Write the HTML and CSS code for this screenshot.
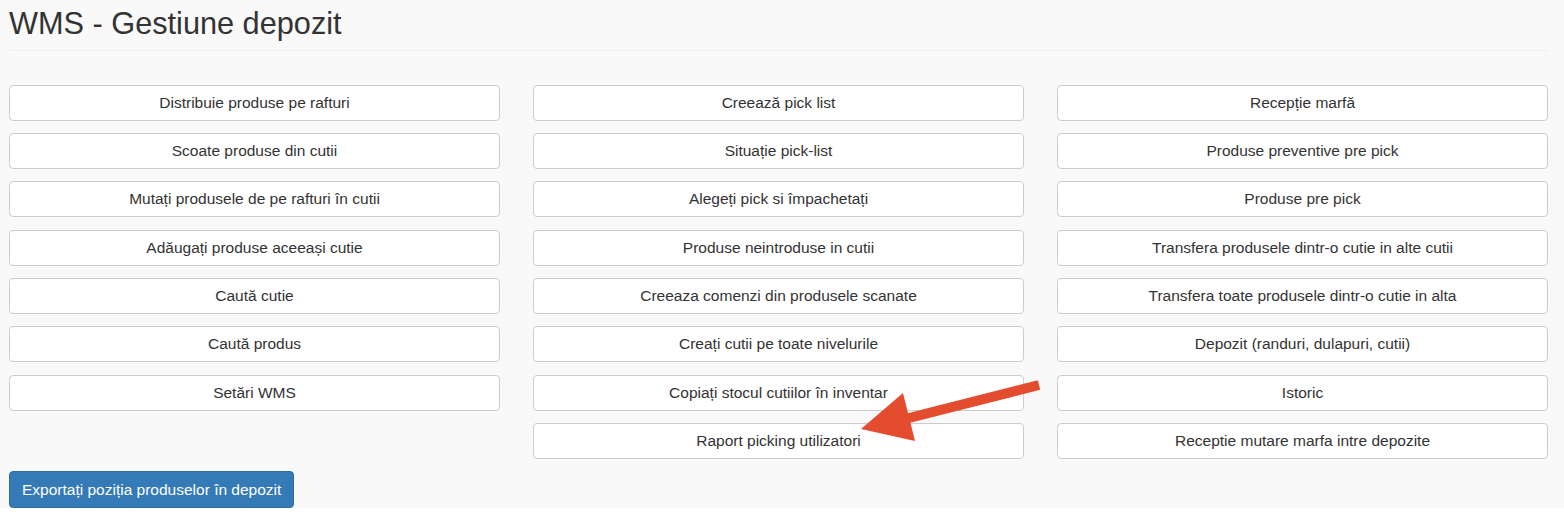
FILE: index.html
```html
<!DOCTYPE html>
<html>

<head>
    <link rel="stylesheet" href="styles.css">
</head>

<body>
    <div id="page">
        <h2 class="page-title">WMS - Gestiune depozit</h2>

        <div class="menu">
            <div class="menu-col">
                <a class="btn">Distribuie produse pe rafturi</a>
                <a class="btn">Scoate produse din cutii</a>
                <a class="btn">Mutați produsele de pe rafturi în cutii</a>
                <a class="btn">Adăugați produse aceeași cutie</a>
                <a class="btn">Caută cutie</a>
                <a class="btn">Caută produs</a>
                <a class="btn">Setări WMS</a>
            </div>
            <div class="menu-col">
                <a class="btn">Creează pick list</a>
                <a class="btn">Situație pick-list</a>
                <a class="btn">Alegeți pick si împachetați</a>
                <a class="btn">Produse neintroduse in cutii</a>
                <a class="btn">Creeaza comenzi din produsele scanate</a>
                <a class="btn">Creați cutii pe toate nivelurile</a>
                <a class="btn">Copiați stocul cutiilor în inventar</a>
                <a class="btn">Raport picking utilizatori</a>
            </div>
            <div class="menu-col">
                <a class="btn">Recepție marfă</a>
                <a class="btn">Produse preventive pre pick</a>
                <a class="btn">Produse pre pick</a>
                <a class="btn">Transfera produsele dintr-o cutie in alte cutii</a>
                <a class="btn">Transfera toate produsele dintr-o cutie in alta</a>
                <a class="btn">Depozit (randuri, dulapuri, cutii)</a>
                <a class="btn">Istoric</a>
                <a class="btn">Receptie mutare marfa intre depozite</a>
            </div>
        </div>

        <a class="btn btn-primary">Exportați poziția produselor în depozit</a>

        <!-- sageata rosie peste butoane -->
        <svg class="arrow" width="1564" height="520" viewBox="0 0 1564 520">
            <line x1="1039" y1="385" x2="905" y2="419" stroke="#e34c2e" stroke-width="10" />
            <polygon points="861,429 903,393 915,441" fill="#e34c2e" />
        </svg>
    </div>
</body>

</html>
```

FILE: styles.css
```css
body {
    margin: 0;
    background-color: #fff;
    font-family: "Liberation Sans", Arial, sans-serif;
    font-size: 15.5px;
    color: #333;
}

#page {
    position: relative;
    background-color: #f9f9f9;
    padding: 7px 16px 0 9px;
}

.page-title {
    margin: 0;
    font-size: 30.7px;
    font-weight: 500;
    line-height: 33px;
    padding-bottom: 10px;
    border-bottom: 1px solid #eee;
}

.menu {
    display: grid;
    grid-template-columns: repeat(3, 1fr);
    column-gap: 33px;
    margin-top: 33.5px;
}

.menu-col {
    display: flex;
    flex-direction: column;
    gap: 12.4px;
}

.btn {
    display: flex;
    align-items: center;
    justify-content: center;
    box-sizing: border-box;
    height: 36px;
    padding: 0 12px;
    background-color: #fff;
    border: 1px solid #ccc;
    border-radius: 4px;
    color: #333;
    white-space: nowrap;
}

.btn-primary {
    display: inline-flex;
    height: 37px;
    margin-top: 12px;
    background-color: #337ab7;
    border-color: #2e6da4;
    color: #fff;
}

.arrow {
    position: absolute;
    top: 0;
    left: 0;
    pointer-events: none;
}
```
